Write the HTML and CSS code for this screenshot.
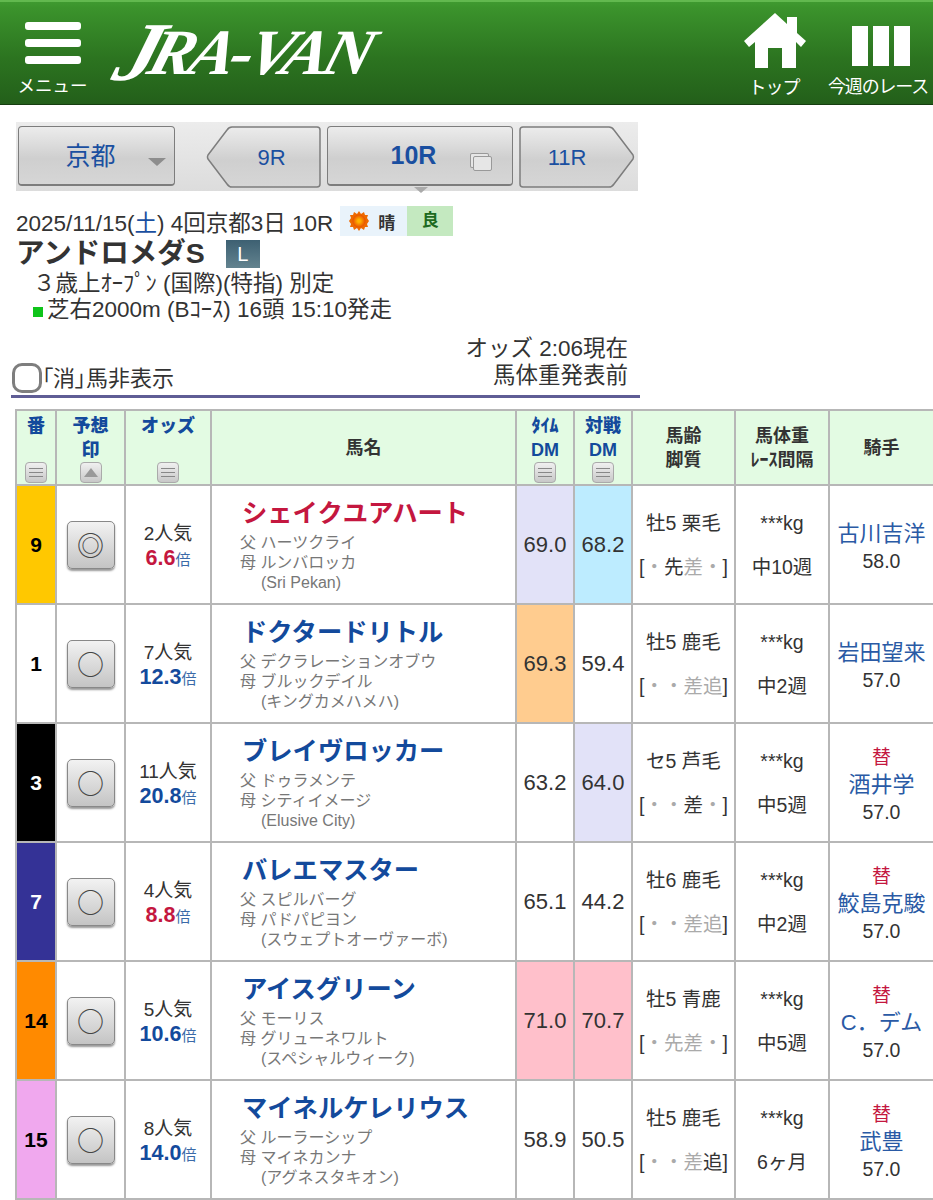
FILE: index.html
```html
<!DOCTYPE html>
<html lang="ja">
<head>
	<meta charset="utf-8">
	<title>JRA-VAN 出馬表</title>
	<link rel="stylesheet" href="styles.css">
</head>
<body>

<header class="topbar">
	<a class="menu">
		<span class="burger"><i></i><i></i><i></i></span>
		<span class="menu-label">メニュー</span>
	</a>
	<div class="logo"><span class="logo-j">J</span>RA-VAN</div>
	<a class="nav-top">
		<svg width="62" height="57" viewBox="0 0 62 57">
			<path fill="#fff" d="M31 1 L43 12 V5 H53 V21 L62 29 L57 35 L52 30 V56 H38 V36 H24 V56 H11 V30 L5 35 L0 29 Z"/>
		</svg>
		<span>トップ</span>
	</a>
	<a class="nav-week">
		<span class="bars"><i></i><i></i><i></i></span>
		<span>今週のレース</span>
	</a>
</header>

<nav class="race-nav">
	<div class="btn place">京都<span class="caret"></span></div>
	<div class="btn-arrow prev">
		<svg width="115" height="62" viewBox="0 0 115 62">
			<defs>
				<linearGradient id="gr" x1="0" y1="0" x2="0" y2="1">
					<stop offset="0" stop-color="#ececec"/>
					<stop offset="0.55" stop-color="#cfcfcf"/>
					<stop offset="1" stop-color="#d6d6d6"/>
				</linearGradient>
			</defs>
			<path fill="url(#gr)" stroke="#7d7d7d" stroke-width="1.5" stroke-linejoin="round" d="M111 1 Q114 1 114 4 V58 Q114 61 111 61 H26 Q23 61 21 58 L2 33 Q1 31 2 29 L21 4 Q23 1 26 1 Z"/>
		</svg>
		<span>9R</span>
	</div>
	<div class="btn current">10R<span class="copy"></span><span class="pointer"></span></div>
	<div class="btn-arrow next">
		<svg width="116" height="62" viewBox="0 0 116 62">
			<path fill="url(#gr)" stroke="#7d7d7d" stroke-width="1.5" stroke-linejoin="round" d="M4 1 Q1 1 1 4 V58 Q1 61 4 61 H90 Q93 61 95 58 L114 33 Q115 31 114 29 L95 4 Q93 1 90 1 Z"/>
		</svg>
		<span>11R</span>
	</div>
</nav>

<section class="race-info">
	<div class="date-line">
		<span>2025/11/15(<a>土</a>) 4回京都3日 10R</span>
		<span class="weather">
			<svg width="22" height="22" viewBox="0 0 22 22">
				<defs>
					<radialGradient id="sun">
						<stop offset="0.2" stop-color="#ffb400"/>
						<stop offset="1" stop-color="#e84e00"/>
					</radialGradient>
				</defs>
				<path fill="#ee6a00" d="M11 1 L13 4 L16 2 L17 5 L20 5 L19 8 L21 11 L19 14 L20 17 L17 17 L16 20 L13 18 L11 21 L9 18 L6 20 L5 17 L2 17 L3 14 L1 11 L3 8 L2 5 L5 5 L6 2 L9 4 Z"/>
				<circle cx="11" cy="11" r="6.5" fill="url(#sun)"/>
			</svg>
			晴
		</span>
		<span class="going">良</span>
	</div>
	<h1 class="race-name">アンドロメダS<span class="grade">L</span></h1>
	<div class="cond">３歳上ｵｰﾌﾟﾝ (国際)(特指) 別定</div>
	<div class="course"><i class="turf"></i>芝右2000m (Bｺｰｽ) 16頭 15:10発走</div>
</section>

<div class="filter-row">
	<label class="scratch"><span class="check"></span><span class="scratch-text">「消」馬非表示</span></label>
	<div class="odds-time">オッズ 2:06現在<br>馬体重発表前</div>
</div>

<table class="shutuba">
	<colgroup>
		<col class="c-num"><col class="c-mark"><col class="c-odds"><col class="c-name"><col class="c-dm"><col class="c-dm"><col class="c-age"><col class="c-wt"><col class="c-jk">
	</colgroup>
	<thead>
		<tr>
			<th class="sortable"><b>番</b><span class="sort"></span></th>
			<th class="sortable"><b>予想<br>印</b><span class="sort up"></span></th>
			<th class="sortable"><b>オッズ</b><span class="sort"></span></th>
			<th>馬名</th>
			<th class="sortable dm"><b>ﾀｲﾑ<br>DM</b><span class="sort"></span></th>
			<th class="sortable dm"><b>対戦<br>DM</b><span class="sort"></span></th>
			<th>馬齢<br>脚質</th>
			<th>馬体重<br>ﾚｰｽ間隔</th>
			<th>騎手</th>
		</tr>
	</thead>
	<tbody>
		<tr>
			<td class="num w-yellow">9</td>
			<td><span class="mark">◎</span></td>
			<td class="odds">2人気<br><em class="hot">6.6</em><small>倍</small></td>
			<td class="horse">
				<a class="hot">シェイクユアハート</a>
				<p>父 ハーツクライ<br>母 ルンバロッカ<br><span>(Sri Pekan)</span></p>
			</td>
			<td class="dm-v bg-lav">69.0</td>
			<td class="dm-v bg-sky">68.2</td>
			<td class="age">牡5 栗毛<div class="style">[<s>・</s>先<s>差・</s>]</div></td>
			<td class="wt">***kg<div class="gap">中10週</div></td>
			<td class="jockey"><a>古川吉洋</a><br>58.0</td>
		</tr>
		<tr>
			<td class="num">1</td>
			<td><span class="mark">○</span></td>
			<td class="odds">7人気<br><em>12.3</em><small>倍</small></td>
			<td class="horse">
				<a>ドクタードリトル</a>
				<p>父 デクラレーションオブウ<br>母 ブルックデイル<br><span>(キングカメハメハ)</span></p>
			</td>
			<td class="dm-v bg-orange">69.3</td>
			<td class="dm-v">59.4</td>
			<td class="age">牡5 鹿毛<div class="style">[<s>・・差追</s>]</div></td>
			<td class="wt">***kg<div class="gap">中2週</div></td>
			<td class="jockey"><a>岩田望来</a><br>57.0</td>
		</tr>
		<tr>
			<td class="num w-black">3</td>
			<td><span class="mark">○</span></td>
			<td class="odds">11人気<br><em>20.8</em><small>倍</small></td>
			<td class="horse">
				<a>ブレイヴロッカー</a>
				<p>父 ドゥラメンテ<br>母 シティイメージ<br><span>(Elusive City)</span></p>
			</td>
			<td class="dm-v">63.2</td>
			<td class="dm-v bg-lav">64.0</td>
			<td class="age">セ5 芦毛<div class="style">[<s>・・</s>差<s>・</s>]</div></td>
			<td class="wt">***kg<div class="gap">中5週</div></td>
			<td class="jockey"><span class="sub">替</span><a>酒井学</a><br>57.0</td>
		</tr>
		<tr>
			<td class="num w-blue">7</td>
			<td><span class="mark">○</span></td>
			<td class="odds">4人気<br><em class="hot">8.8</em><small>倍</small></td>
			<td class="horse">
				<a>バレエマスター</a>
				<p>父 スピルバーグ<br>母 パドパピヨン<br><span>(スウェプトオーヴァーボ)</span></p>
			</td>
			<td class="dm-v">65.1</td>
			<td class="dm-v">44.2</td>
			<td class="age">牡6 鹿毛<div class="style">[<s>・・差追</s>]</div></td>
			<td class="wt">***kg<div class="gap">中2週</div></td>
			<td class="jockey"><span class="sub">替</span><a>鮫島克駿</a><br>57.0</td>
		</tr>
		<tr>
			<td class="num w-orange">14</td>
			<td><span class="mark">○</span></td>
			<td class="odds">5人気<br><em>10.6</em><small>倍</small></td>
			<td class="horse">
				<a>アイスグリーン</a>
				<p>父 モーリス<br>母 グリューネワルト<br><span>(スペシャルウィーク)</span></p>
			</td>
			<td class="dm-v bg-pink">71.0</td>
			<td class="dm-v bg-pink">70.7</td>
			<td class="age">牡5 青鹿<div class="style">[<s>・先差・</s>]</div></td>
			<td class="wt">***kg<div class="gap">中5週</div></td>
			<td class="jockey"><span class="sub">替</span><a>C．デム</a><br>57.0</td>
		</tr>
		<tr>
			<td class="num w-pink">15</td>
			<td><span class="mark">○</span></td>
			<td class="odds">8人気<br><em>14.0</em><small>倍</small></td>
			<td class="horse">
				<a>マイネルケレリウス</a>
				<p>父 ルーラーシップ<br>母 マイネカンナ<br><span>(アグネスタキオン)</span></p>
			</td>
			<td class="dm-v">58.9</td>
			<td class="dm-v">50.5</td>
			<td class="age">牡5 鹿毛<div class="style">[<s>・・差</s>追]</div></td>
			<td class="wt">***kg<div class="gap">6ヶ月</div></td>
			<td class="jockey"><span class="sub">替</span><a>武豊</a><br>57.0</td>
		</tr>
	</tbody>
</table>

</body>
</html>
```
FILE: styles.css
```css
html, body {
	margin: 0;
	padding: 0;
	height: 1200px;
	overflow: hidden;
	background: #fff;
}

body {
	font-family: "Liberation Sans", "Noto Sans CJK JP", sans-serif;
	color: #333;
	font-size: 22.5px;
}

/* header */
.topbar {
	height: 105px;
	box-sizing: border-box;
	display: flex;
	background: linear-gradient(#3f9a30 0, #3b932c 6px, #2c7420 55%, #235f1a 100%);
	border-top: 2px solid #62b94f;
	border-bottom: 1px solid #163d10;
	color: #fff;
}

.menu {
	width: 105px;
	display: flex;
	flex-direction: column;
	align-items: center;
	padding-top: 20px;
	box-sizing: border-box;
}

.burger {
	display: flex;
	flex-direction: column;
	gap: 9px;
	width: 56px;
}

.burger i {
	display: block;
	height: 8px;
	background: #fff;
	border-radius: 3px;
}

.menu-label {
	font-size: 17.5px;
	margin-top: 11px;
	line-height: 22px;
}

.logo {
	flex: 1;
	font-family: "Liberation Serif", serif;
	font-weight: bold;
	font-style: italic;
	font-size: 68px;
	letter-spacing: -5px;
	line-height: 100px;
	margin-left: 13px;
	white-space: nowrap;
	transform: scaleY(0.95) skewX(-16deg);
	transform-origin: left center;
}

.logo-j {
	font-size: 88px;
	line-height: 0;
	vertical-align: -6px;
	margin-right: -6px;
}

.nav-top, .nav-week {
	display: flex;
	flex-direction: column;
	align-items: center;
	font-size: 18px;
	line-height: 22px;
	white-space: nowrap;
}

.nav-top {
	width: 62px;
	padding-top: 10px;
	margin-right: 22px;
	letter-spacing: -1px;
}

.nav-top svg {
	margin: 0 0 8px 2px;
}

.nav-week {
	width: 102px;
	padding-top: 24px;
	margin-right: 4px;
	letter-spacing: -1.2px;
}

.bars {
	display: flex;
	gap: 5px;
	margin: 0 0 10px 5px;
}

.bars i {
	display: block;
	width: 16px;
	height: 40px;
	background: #fff;
}

/* race nav */
.race-nav {
	margin: 17px 0 0 16px;
	width: 622px;
	height: 69px;
	box-sizing: border-box;
	padding: 4px 0 0 2px;
	display: flex;
	background: linear-gradient(#ececec, #dcdcdc);
}

.btn {
	height: 60px;
	box-sizing: border-box;
	border: 1px solid #7d7d7d;
	border-bottom-width: 2px;
	border-radius: 4px;
	background: linear-gradient(#ececec, #cfcfcf 55%, #d6d6d6);
	color: #1a4fa0;
	position: relative;
	display: flex;
	align-items: center;
	justify-content: center;
}

.place {
	width: 157px;
	font-size: 25px;
	padding: 0 12px 4px 0;
	margin-right: 31px;
}

.caret {
	position: absolute;
	right: 8px;
	top: 31px;
	border: 9px solid transparent;
	border-bottom: 0;
	border-top: 8px solid #8d8d8d;
}

.btn-arrow {
	position: relative;
	height: 62px;
	color: #1a4fa0;
	font-size: 22px;
}

.btn-arrow svg {
	display: block;
}

.btn-arrow span {
	position: absolute;
	top: 19px;
	left: 0;
	right: 0;
	text-align: center;
}

.prev {
	width: 115px;
	margin-right: 6px;
}

.prev span {
	left: 16px;
}

.next {
	width: 116px;
	margin-left: 6px;
}

.next span {
	right: 20px;
}

.current {
	width: 186px;
	font-size: 25px;
	font-weight: bold;
	padding-right: 13px;
}

.copy {
	position: absolute;
	right: 20px;
	top: 29px;
	width: 17px;
	height: 13px;
	border: 1px solid #999;
	border-radius: 2px;
	background: #e6e6e6;
	box-shadow: -3px -3px 0 -1px #e6e6e6, -3px -3px 0 0 #999;
}

.pointer {
	position: absolute;
	left: 86px;
	top: 60px;
	border: 7px solid transparent;
	border-bottom: 0;
	border-top: 6px solid #aaa;
}

/* race information */
.race-info {
	margin: 15px 0 0 16px;
}

.date-line {
	display: flex;
	align-items: center;
	height: 30px;
}

.date-line a {
	color: #1a4fa0;
}

.weather {
	margin-left: 7px;
	width: 67px;
	height: 30px;
	box-sizing: border-box;
	padding-left: 8px;
	background: #e9f3fb;
	display: flex;
	align-items: center;
	gap: 8px;
	font-size: 17px;
	font-weight: bold;
}

.going {
	width: 46px;
	height: 30px;
	line-height: 30px;
	text-align: center;
	background: #c4e9c0;
	color: #1d6a20;
	font-size: 17px;
	font-weight: bold;
}

.race-name {
	margin: 0;
	font-size: 28.5px;
	line-height: 35px;
	display: flex;
	align-items: center;
}

.grade {
	width: 34px;
	height: 28px;
	margin-left: 21px;
	background: linear-gradient(#3d6072, #63838f);
	color: #fff;
	font-size: 20px;
	font-weight: normal;
	line-height: 28px;
	text-align: center;
}

.cond {
	margin-left: 17px;
	line-height: 26px;
}

.course {
	margin-left: 17px;
	line-height: 26px;
}

.turf {
	display: inline-block;
	width: 10px;
	height: 10px;
	margin-right: 4px;
	background: #0fc41a;
}

/* filter */
.filter-row {
	margin: 11px 0 0 11px;
	width: 629px;
	height: 64px;
	box-sizing: border-box;
	border-bottom: 3px solid #5f5d95;
	display: flex;
	justify-content: space-between;
	align-items: flex-end;
}

.scratch {
	display: flex;
	align-items: center;
	font-size: 22px;
	font-feature-settings: "palt";
	height: 34px;
}

.scratch-text {
	margin-bottom: 4px;
}

.check {
	width: 30px;
	height: 30px;
	margin-left: 1px;
	box-sizing: border-box;
	border: 3px solid #7e7e7e;
	border-radius: 10px;
}

.odds-time {
	text-align: right;
	line-height: 27px;
	margin-right: 12px;
	margin-bottom: 6px;
}

/* table */
.shutuba {
	margin: 11px 0 0 15px;
	width: 918px;
	table-layout: fixed;
	border-collapse: collapse;
	border: 2px solid #b7b7b7;
	border-right: 0;
	font-size: 19.5px;
}

.c-num { width: 40px; }
.c-mark { width: 69px; }
.c-odds { width: 86px; }
.c-name { width: 305px; }
.c-dm { width: 58px; }
.c-age { width: 103px; }
.c-wt { width: 94px; }
.c-jk { width: 105px; }

.shutuba th, .shutuba td {
	box-sizing: border-box;
	border: 2px solid #b7b7b7;
	padding: 0;
	text-align: center;
	vertical-align: middle;
}

.shutuba th {
	height: 75px;
	background: #e3fbe3;
	font-size: 18px;
	line-height: 24px;
	color: #333;
}

.sortable {
	position: relative;
}

th b {
	display: block;
	position: absolute;
	top: 3px;
	left: 0;
	right: 0;
	color: #134a9c;
	line-height: 24px;
	white-space: nowrap;
}

.sort {
	position: absolute;
	left: 50%;
	margin-left: -11px;
	bottom: 1px;
	width: 22px;
	height: 21px;
	box-sizing: border-box;
	border: 1px solid #aaa;
	border-radius: 4px;
	background:
		linear-gradient(#888, #888) center 5px / 14px 1px no-repeat,
		linear-gradient(#888, #888) center 9px / 14px 1px no-repeat,
		linear-gradient(#888, #888) center 13px / 14px 1px no-repeat,
		linear-gradient(#f0f0f0, #c8c8c8);
}

.sort.up {
	background: linear-gradient(#f0f0f0, #c8c8c8);
}

.sort.up::before {
	content: "";
	position: absolute;
	left: 3px;
	top: 5px;
	border: 7px solid transparent;
	border-top: 0;
	border-bottom: 9px solid #999;
}

.shutuba td {
	height: 119px;
}

.num {
	font-size: 21px;
	font-weight: bold;
	color: #000;
}

.w-yellow { background: #ffc800; }
.w-black { background: #000; color: #fff; }
.w-blue { background: #343296; color: #fff; }
.w-orange { background: #ff8a00; }
.w-pink { background: #f0a8ee; }

.mark {
	display: block;
	width: 48px;
	height: 48px;
	margin: 0 auto;
	box-sizing: border-box;
	border: 1px solid #888;
	border-radius: 5px;
	background: linear-gradient(#f2f2f2, #c4c4c4);
	box-shadow: 0 2px 2px #999;
	font-family: "Noto Sans CJK JP", sans-serif;
	font-size: 27px;
	line-height: 46px;
	color: #444;
}

.odds {
	line-height: 25px;
	font-size: 19px;
	padding-top: 4px !important;
}

.odds em {
	font-style: normal;
	font-weight: bold;
	font-size: 21.5px;
	color: #134a9c;
}

.odds em.hot {
	color: #c4173f;
}

.odds small {
	font-size: 15px;
	color: #3a6aa8;
}

.horse {
	text-align: left !important;
	padding-left: 30px !important;
}

.horse a {
	display: block;
	font-size: 25.3px;
	font-weight: bold;
	line-height: 34px;
	color: #134a9c;
	white-space: nowrap;
}

.horse a.hot {
	color: #c4173f;
}

.horse p {
	margin: 3px 0 0 -2px;
	font-size: 16px;
	line-height: 20px;
	color: #777;
	white-space: nowrap;
}

.horse p span {
	padding-left: 21px;
}

.dm-v {
	font-size: 22px;
}

.bg-lav { background: #e2e2f8; }
.bg-sky { background: #bdecff; }
.bg-orange { background: #ffcc8f; }
.bg-pink { background: #ffc0cb; }

.age, .wt {
	line-height: 24px;
}

.style, .gap {
	margin-top: 20px;
}

.style s {
	text-decoration: none;
	color: #aaa;
}

.jockey {
	line-height: 27px;
	padding-top: 5px !important;
}

.jockey a {
	color: #2a5aa5;
	font-size: 22px;
}

.sub {
	display: block;
	color: #c4173f;
	font-size: 19px;
}
```
